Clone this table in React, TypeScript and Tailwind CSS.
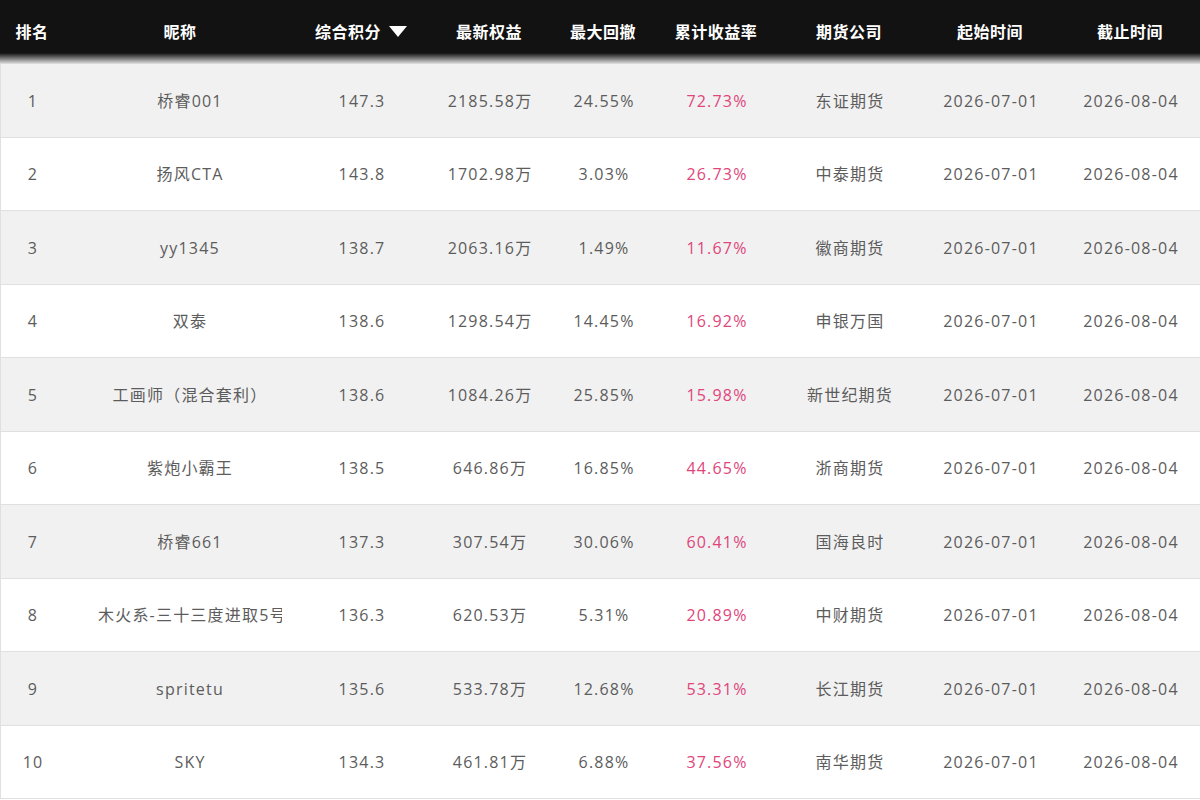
const cols = 'grid grid-cols-[64px_232px_130px_126px_102px_124px_142px_140px_140px]';

type Row = {
    rank: number;
    name: string;
    score: string;
    equity: string;
    drawdown: string;
    yieldRate: string;
    company: string;
};

const rows: Row[] = [
    { rank: 1, name: '桥睿001', score: '147.3', equity: '2185.58万', drawdown: '24.55%', yieldRate: '72.73%', company: '东证期货' },
    { rank: 2, name: '扬风CTA', score: '143.8', equity: '1702.98万', drawdown: '3.03%', yieldRate: '26.73%', company: '中泰期货' },
    { rank: 3, name: 'yy1345', score: '138.7', equity: '2063.16万', drawdown: '1.49%', yieldRate: '11.67%', company: '徽商期货' },
    { rank: 4, name: '双泰', score: '138.6', equity: '1298.54万', drawdown: '14.45%', yieldRate: '16.92%', company: '申银万国' },
    { rank: 5, name: '工画师（混合套利）', score: '138.6', equity: '1084.26万', drawdown: '25.85%', yieldRate: '15.98%', company: '新世纪期货' },
    { rank: 6, name: '紫炮小霸王', score: '138.5', equity: '646.86万', drawdown: '16.85%', yieldRate: '44.65%', company: '浙商期货' },
    { rank: 7, name: '桥睿661', score: '137.3', equity: '307.54万', drawdown: '30.06%', yieldRate: '60.41%', company: '国海良时' },
    { rank: 8, name: '木火系-三十三度进取5号', score: '136.3', equity: '620.53万', drawdown: '5.31%', yieldRate: '20.89%', company: '中财期货' },
    { rank: 9, name: 'spritetu', score: '135.6', equity: '533.78万', drawdown: '12.68%', yieldRate: '53.31%', company: '长江期货' },
    { rank: 10, name: 'SKY', score: '134.3', equity: '461.81万', drawdown: '6.88%', yieldRate: '37.56%', company: '南华期货' },
];

const headers = ['排名', '昵称', '综合积分', '最新权益', '最大回撤', '累计收益率', '期货公司', '起始时间', '截止时间'];

export default function App() {
    return (
        <div className="w-[1200px] h-[800px] overflow-hidden bg-white font-['Open_Sans','Noto_Sans_CJK_SC',sans-serif]">
            {/* Header */}
            <div
                className={`${cols} h-[64px] items-center pb-[2px] bg-[linear-gradient(to_bottom,#121212_0,#121212_53px,#e2e2e2_64px)] text-white text-[16px] font-bold tracking-[0.5px] font-['Noto_Sans_CJK_SC',sans-serif]`}
            >
                {headers.map((h) => (
                    <div key={h} className="flex items-center justify-center">
                        <span>{h}</span>
                        {h === '综合积分' && (
                            <svg width="18" height="11" viewBox="0 0 18 11" className="ml-[8px]">
                                <path d="M0 0 H18 L9 11 Z" fill="#fff" />
                            </svg>
                        )}
                    </div>
                ))}
            </div>

            {/* Body */}
            {rows.map((r) => (
                <div
                    key={r.rank}
                    className={`${cols} h-[73.5px] items-center pt-[1px] border-b border-l border-[#e0e0e0] text-[16px] tracking-[1.2px] text-[#5c5c5c] ${
                        r.rank % 2 === 1 ? 'bg-[#f1f1f1]' : 'bg-white'
                    }`}
                >
                    <div className="text-center">{r.rank}</div>
                    <div className="ml-[33px] w-[184px] overflow-hidden whitespace-nowrap text-center">{r.name}</div>
                    <div className="text-center">{r.score}</div>
                    <div className="text-center">{r.equity}</div>
                    <div className="text-center">{r.drawdown}</div>
                    <div className="text-center text-[#e0457b]">{r.yieldRate}</div>
                    <div className="text-center">{r.company}</div>
                    <div className="text-center">2026-07-01</div>
                    <div className="text-center">2026-08-04</div>
                </div>
            ))}
        </div>
    );
}
